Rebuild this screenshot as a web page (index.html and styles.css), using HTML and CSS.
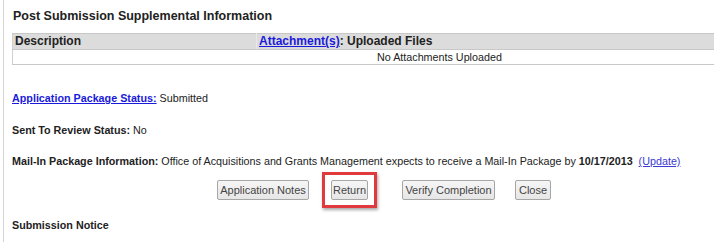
FILE: index.html
```html
<!DOCTYPE html>
<html>
<head>
<meta charset="utf-8">
<link rel="stylesheet" href="styles.css">
</head>
<body>
<div class="page">
  <h2 class="title">Post Submission Supplemental Information</h2>
  <table class="grid">
    <thead>
      <tr>
        <th class="c1">Description</th>
        <th class="c2"><a href="#">Attachment(s)</a>: Uploaded Files</th>
      </tr>
    </thead>
    <tbody>
      <tr><td colspan="2" class="empty">No Attachments Uploaded</td></tr>
    </tbody>
  </table>

  <p class="line l1"><a href="#" class="blink">Application Package Status:</a> Submitted</p>
  <p class="line l2"><b>Sent To Review Status:</b> No</p>
  <p class="line l3"><b>Mail-In Package Information:</b> Office of Acquisitions and Grants Management expects to receive a Mail-In Package by <b>10/17/2013</b>&nbsp; <a href="#" class="upd">(Update)</a></p>

  <div class="buttons">
    <button class="btn b-notes">Application Notes</button>
    <span class="highlight"><button class="btn">Return</button></span>
    <button class="btn b-verify">Verify Completion</button>
    <button class="btn b-close">Close</button>
  </div>

  <p class="line l4"><b>Submission Notice</b></p>
</div>
</body>
</html>
```

FILE: styles.css
```css
html, body {
  margin: 0;
  padding: 0;
  background: #fff;
}
body {
  font-family: "Liberation Sans", Arial, sans-serif;
  font-size: 11px;
  color: #222;
}
.page {
  margin-left: 3px;
  border-left: 1px solid #d4d4d4;
  padding-left: 8px;
  height: 242px;
  box-sizing: border-box;
  overflow: hidden;
}
.title {
  margin: 0;
  padding-top: 8px;
  height: 25px;
  font-size: 12.5px;
  line-height: 16px;
  font-weight: bold;
  color: #222;
  padding-left: 1px;
}
.grid {
  border-collapse: collapse;
  width: 720px;
  border-left: 1px solid #d0d0d0;
}
.grid th {
  background: #dcdcdc;
  border-top: 1px solid #c8c8c8;
  border-bottom: 1px solid #c8c8c8;
  text-align: left;
  font-size: 12px;
  font-weight: bold;
  height: 15px;
  padding: 0 0 0 2px;
  line-height: 15px;
  color: #222;
}
.grid th.c1 {
  width: 241px;
  border-right: 1px solid #e8e8e8;
}
.grid th a {
  color: #1a1adb;
  text-decoration: underline;
}
.grid td.empty {
  text-align: left;
  padding: 0 0 0 364px;
  height: 14px;
  line-height: 14px;
  border-bottom: 1px solid #c8c8c8;
  font-size: 10.75px;
}
.line {
  margin: 0;
  font-size: 10.75px;
  line-height: 14px;
}
.l1 { margin-top: 26px; }
.l2 { margin-top: 18px; }
.l3 { margin-top: 17px; }
.blink {
  color: #1a1adb;
  font-weight: bold;
  text-decoration: underline;
}
.upd {
  color: #3b3bd6;
  text-decoration: underline;
}
.buttons {
  display: flex;
  align-items: center;
  margin-top: 5px;
  padding-left: 205px;
  height: 34px;
}
.btn {
  font-family: "Liberation Sans", Arial, sans-serif;
  font-size: 11px;
  color: #444;
  height: 20px;
  padding: 0;
  border: 1px solid #a6a6a6;
  border-radius: 2px;
  background: linear-gradient(#f6f6f6, #e6e6e6);
  line-height: 18px;
  white-space: nowrap;
  flex: none;
}
.b-notes { width: 92px; }
.highlight {
  display: inline-flex;
  flex: none;
  margin-left: 13px;
  padding: 5px 6px;
  border: 3px solid #e03a3e;
  box-shadow: 1px 2px 3px rgba(0, 0, 0, 0.35);
}
.highlight .btn { width: 37px; }
.b-verify { width: 93px; margin-left: 25px; }
.b-close { width: 36px; margin-left: 20px; }
.l4 { margin-top: 11px; }
```
